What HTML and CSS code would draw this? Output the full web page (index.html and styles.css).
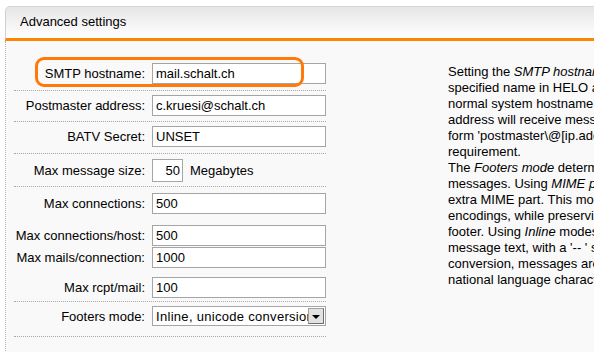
FILE: index.html
```html
<!DOCTYPE html>
<html lang="en">

<head>
    <meta charset="utf-8">
    <title>Advanced settings</title>
    <link rel="stylesheet" href="styles.css">
</head>

<body>

    <div class="panel">
        <div class="panel-head">Advanced settings</div>

        <div class="panel-body">

            <div class="form">
                <div class="row r1 sep">
                    <div class="highlight"></div>
                    <label class="label">SMTP hostname:</label>
                    <input class="field" type="text" value="mail.schalt.ch">
                </div>
                <div class="row r2 sep">
                    <label class="label">Postmaster address:</label>
                    <input class="field" type="text" value="c.kruesi@schalt.ch">
                </div>
                <div class="row r3 sep">
                    <label class="label">BATV Secret:</label>
                    <input class="field" type="text" value="UNSET">
                </div>
                <div class="row r4 sep">
                    <label class="label">Max message size:</label>
                    <input class="field small" type="text" value="50">
                    <span class="unit">Megabytes</span>
                </div>
                <div class="row r5">
                    <label class="label">Max connections:</label>
                    <input class="field" type="text" value="500">
                </div>
                <div class="row r6">
                    <label class="label">Max connections/host:</label>
                    <input class="field" type="text" value="500">
                </div>
                <div class="row r7">
                    <label class="label">Max mails/connection:</label>
                    <input class="field" type="text" value="1000">
                </div>
                <div class="row r8 sep">
                    <label class="label">Max rcpt/mail:</label>
                    <input class="field" type="text" value="100">
                </div>
                <div class="row r9 sep">
                    <label class="label">Footers mode:</label>
                    <div class="select">
                        <span class="select-text">Inline, unicode conversion</span>
                        <span class="select-btn"><span class="arrow"></span></span>
                    </div>
                </div>
            </div>

            <div class="help">
                <p>
                    Setting the <em>SMTP hostname</em> option makes the server use the<br>
                    specified name in HELO and EHLO greetings instead of the<br>
                    normal system hostname. The postmaster<br>
                    address will receive messages sent to addresses of the<br>
                    form 'postmaster\@[ip.address]', as set by the RFC<br>
                    requirement.
                </p>
                <p>
                    The <em>Footers mode</em> determines how footers are added to<br>
                    messages. Using <em>MIME parts</em> mode, the footer is added as an<br>
                    extra MIME part. This mode keeps the original<br>
                    encodings, while preserving the message and the<br>
                    footer. Using <em>Inline</em> modes, the footer is appended to the<br>
                    message text, with a '-- ' separator. With unicode<br>
                    conversion, messages are converted to UTF-8 so that<br>
                    national language characters are kept intact.
                </p>
            </div>

        </div>
    </div>

</body>

</html>
```

FILE: styles.css
```css
body {
    margin: 0;
    background-color: #ffffff;
    font-family: "Liberation Sans", Arial, sans-serif;
    font-size: 13px;
    color: #000000;
    overflow: hidden;
}

.panel {
    margin: 6px 0 0 5px;
    overflow: hidden;
}

.panel-head {
    height: 30px;
    padding: 1px 0 0 14px;
    line-height: 28px;
    border-top: 1px solid #d6d6d6;
    border-left: 1px solid #d0d0d0;
    border-top-left-radius: 5px;
    border-bottom: 3px solid #ff8400;
    background: linear-gradient(#e6e6e6, #f4f4f4 55%, #ffffff);
}

.panel-body {
    display: flex;
    align-items: flex-start;
    gap: 122px;
    height: 296px;
    padding: 16px 0 0 8px;
    border-left: 1px dotted #b4b4b4;
    background-color: #f9f9f9;
}

/* form column */

.form {
    flex: none;
    width: 312px;
}

.row {
    position: relative;
    display: flex;
    align-items: center;
}

.sep {
    border-bottom: 1px dotted #a8a8a8;
}

.r1 { padding: 6px 0 6px; }
.r2 { padding: 4px 0 5px; }
.r3 { padding: 4px 0 6px; }
.r4 { padding: 5px 0 4px; }
.r5 { padding: 6px 0 5px; }
.r6 { padding: 6px 0 1px; }
.r7 { padding: 0 0 1px; }
.r8 { padding: 8px 0 3px; }
.r9 { padding: 4px 0 10px; }

.label {
    flex: none;
    width: 138px;
    padding-right: 7px;
    box-sizing: border-box;
    text-align: right;
    white-space: nowrap;
}

.field {
    box-sizing: border-box;
    width: 174px;
    height: 21px;
    margin: 0;
    padding: 0 3px;
    border: 1px solid #a5a5a5;
    background-color: #ffffff;
    font-family: inherit;
    font-size: 13px;
    color: #000000;
    outline: none;
}

.small {
    width: 31px;
    height: 23px;
    padding: 0 2px;
    text-align: right;
}

.unit {
    margin-left: 7px;
}

.highlight {
    position: absolute;
    left: 21px;
    top: 0;
    width: 269px;
    height: 30px;
    box-sizing: border-box;
    border: 3px solid #ff7a0a;
    border-radius: 9px;
}

.select {
    display: flex;
    align-items: center;
    box-sizing: border-box;
    width: 174px;
    height: 20px;
    padding: 0 1px 0 3px;
    border: 1px solid #a5a5a5;
    background-color: #ffffff;
    overflow: hidden;
}

.select-text {
    flex: 1;
    overflow: hidden;
    white-space: nowrap;
    letter-spacing: 0.3px;
}

.select-btn {
    display: flex;
    align-items: center;
    justify-content: center;
    flex: none;
    box-sizing: border-box;
    width: 16px;
    height: 16px;
    border: 1px solid #6e6e6e;
    border-top-color: #a0a0a0;
    border-left-color: #a0a0a0;
    background-color: #e2e2e2;
}

.arrow {
    width: 0;
    height: 0;
    border-left: 4px solid transparent;
    border-right: 4px solid transparent;
    border-top: 4px solid #000000;
    margin-top: 1px;
}

/* help column */

.help {
    flex: none;
    margin-top: 7px;
    white-space: nowrap;
    line-height: 16px;
}

.help p {
    margin: 0;
}
```
